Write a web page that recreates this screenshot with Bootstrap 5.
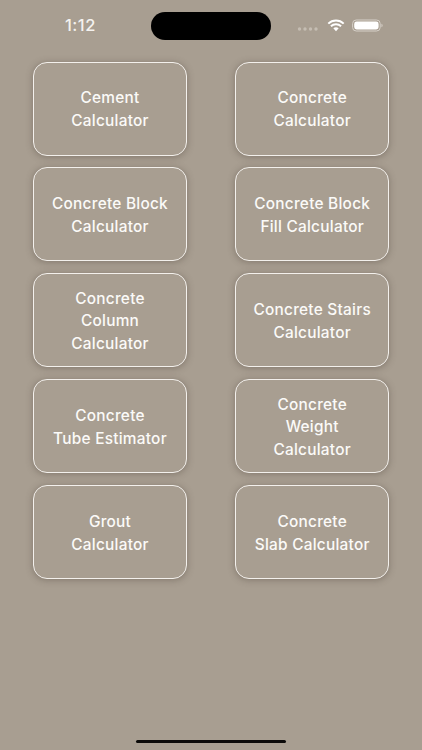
<!DOCTYPE html>
<html lang="en">
<head>
<meta charset="utf-8">
<title>Concrete Calculators</title>
<link rel="stylesheet" href="https://cdn.jsdelivr.net/npm/bootstrap@5.3.0/dist/css/bootstrap.min.css">
<style>
html, body { height: 100%; }
body { background: #a89e91; font-family: Inter, "Liberation Sans", sans-serif; color: #fff; overflow: hidden; }
.phone-screen { width: 422px; height: 750px; }
.status-strip { height: 61.5px; padding: 12px 39px 0 65px; }
.clock-text { width: 86px; height: 28px; font-size: 16.5px; font-weight: 500; line-height: 27px; color: #f4f2ef; letter-spacing: .5px; }
.island { width: 120px; height: 28px; border-radius: 14px; background: #000; }
.status-icons { height: 26px; }
.signal-dots { margin-top: 7px; margin-right: 8px; }
.wifi-mark { margin-right: 7px; }
.calc-grid { display: grid; grid-template-columns: 154px 154px; column-gap: 48.2px; row-gap: 11.9px; padding-left: 33px; }
.calc-tile { height: 94px; padding: 3px 8px 0; border: 1.2px solid #f3f0ec; border-radius: 14px; background: #a89e91; box-shadow: 0 1px 7px rgba(60,50,40,.35); color: #fbfaf8; font-size: 15.4px; font-weight: 500; line-height: 22.7px; letter-spacing: .25px; text-align: center; }
.home-bar { width: 150px; height: 3px; border-radius: 2px; background: #0c0a09; margin-bottom: 7px; }
</style>
</head>
<body>
<div class="phone-screen d-flex flex-column">
  <div class="status-strip d-flex align-items-start">
    <div class="clock-text">1:12</div>
    <div class="island"></div>
    <div class="status-icons ms-auto d-flex align-items-center">
      <svg class="signal-dots" width="22" height="6" viewBox="0 0 22 6"><g fill="#c5bdb3"><circle cx="2.5" cy="3" r="1.7"/><circle cx="8" cy="3" r="1.7"/><circle cx="13.5" cy="3" r="1.7"/><circle cx="19" cy="3" r="1.7"/></g></svg>
      <svg class="wifi-mark" width="18" height="13" viewBox="0 0 18 13" fill="none"><path d="M1.3 4.6C5.6.5 12.4.5 16.7 4.6M3.9 7.2c2.9-2.6 7.3-2.6 10.2 0" stroke="#fff" stroke-width="2"/><path d="M6.3 9.3c1.6-1.3 3.8-1.3 5.4 0L9 12.3z" fill="#fff"/></svg>
      <svg width="31" height="13" viewBox="0 0 31 13"><rect x=".6" y="1" width="27.6" height="11" rx="3.6" fill="none" stroke="#d6d0c8" stroke-width="1"/><rect x="2.2" y="2.6" width="24.4" height="7.8" rx="2.4" fill="#fff"/><path d="M29.4 4.8c.9.3 1.3.9 1.3 1.7s-.4 1.4-1.3 1.7z" fill="#cfc8bf"/></svg>
    </div>
  </div>
  <div class="calc-grid">
    <div class="calc-tile d-flex align-items-center justify-content-center">Cement<br>Calculator</div>
    <div class="calc-tile d-flex align-items-center justify-content-center">Concrete<br>Calculator</div>
    <div class="calc-tile d-flex align-items-center justify-content-center">Concrete Block<br>Calculator</div>
    <div class="calc-tile d-flex align-items-center justify-content-center">Concrete Block<br>Fill Calculator</div>
    <div class="calc-tile d-flex align-items-center justify-content-center">Concrete<br>Column<br>Calculator</div>
    <div class="calc-tile d-flex align-items-center justify-content-center">Concrete Stairs<br>Calculator</div>
    <div class="calc-tile d-flex align-items-center justify-content-center">Concrete<br>Tube Estimator</div>
    <div class="calc-tile d-flex align-items-center justify-content-center">Concrete<br>Weight<br>Calculator</div>
    <div class="calc-tile d-flex align-items-center justify-content-center">Grout<br>Calculator</div>
    <div class="calc-tile d-flex align-items-center justify-content-center">Concrete<br>Slab Calculator</div>
  </div>
  <div class="mt-auto d-flex justify-content-center"><div class="home-bar"></div></div>
</div>
<script src="https://cdn.jsdelivr.net/npm/bootstrap@5.3.0/dist/js/bootstrap.bundle.min.js"></script>
</body>
</html>
